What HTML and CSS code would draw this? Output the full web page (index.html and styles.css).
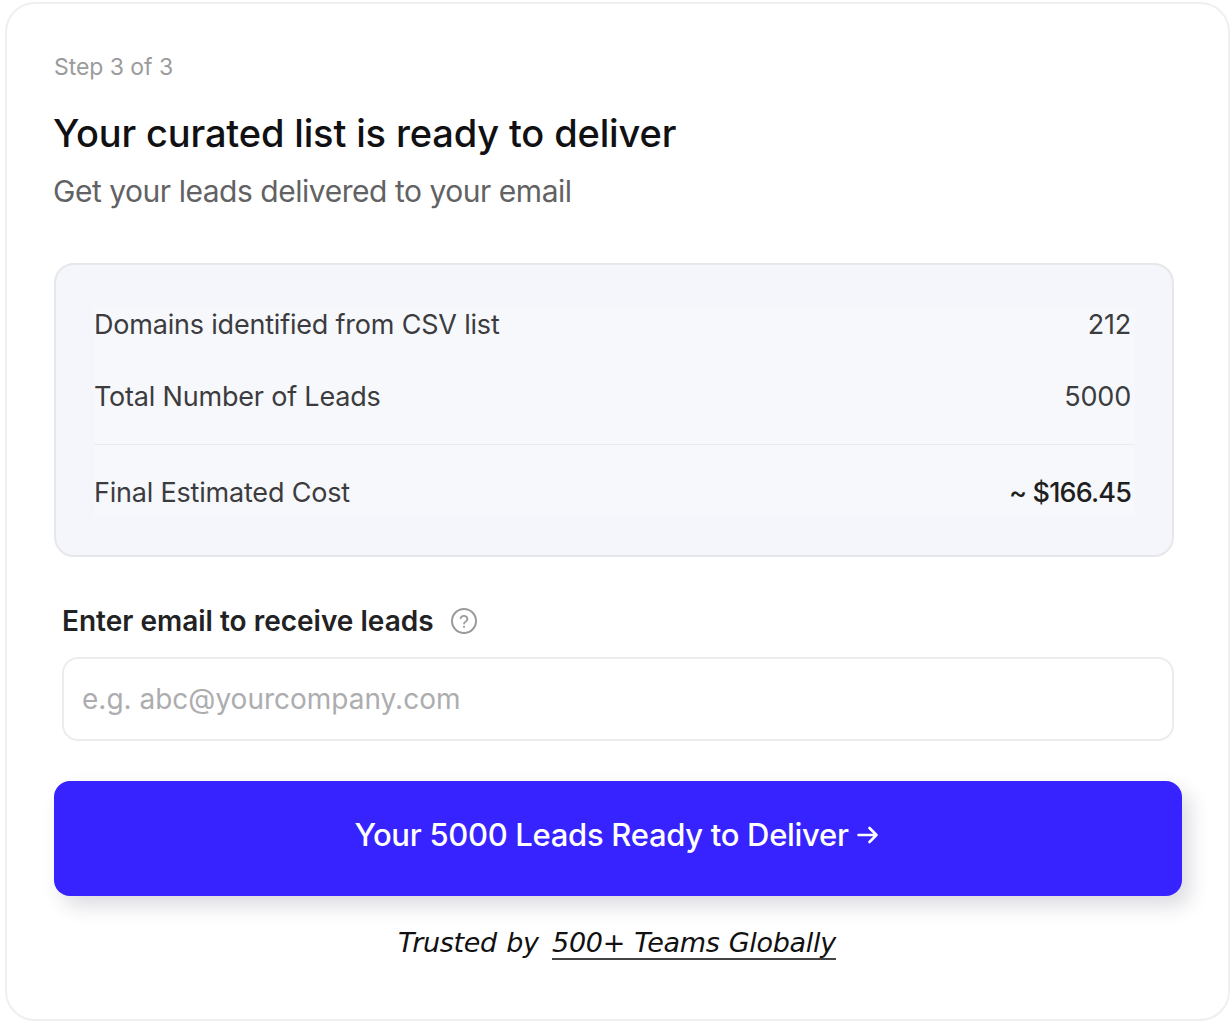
FILE: index.html
```html
<!DOCTYPE html>
<html lang="en">
<head>
<meta charset="utf-8">
<title>Deliver leads</title>
<link rel="stylesheet" href="styles.css">
</head>
<body>
<main class="card">
  <p class="step">Step 3 of 3</p>
  <h1 class="title">Your curated list is ready to deliver</h1>
  <p class="subtitle">Get your leads delivered to your email</p>
  <section class="summary">
    <div class="summary-inner">
      <div class="row row-first"><span>Domains identified from CSV list</span><span>212</span></div>
      <div class="row row-second"><span>Total Number of Leads</span><span>5000</span></div>
      <div class="row row-total"><span>Final Estimated Cost</span><span class="cost">~ $166.45</span></div>
    </div>
  </section>
  <section class="field">
    <div class="label-row">
      <label class="label" for="email">Enter email to receive leads</label>
      <svg class="help" width="28" height="28" viewBox="0 0 28 28" fill="none" aria-hidden="true">
        <circle cx="14" cy="14" r="12" stroke="#9a9a9a" stroke-width="2"/>
        <path d="M10.6 11.2a3.5 3.5 0 0 1 6.800 1c0 2.200-3.300 2.600-3.300 4.400" stroke="#9a9a9a" stroke-width="1.800" stroke-linecap="round"/>
        <circle cx="14" cy="19.8" r="1.1" fill="#9a9a9a"/>
      </svg>
    </div>
    <input class="input" id="email" type="email" placeholder="e.g. abc@yourcompany.com">
  </section>
  <button class="cta" type="button">Your 5000 Leads Ready to Deliver
    <svg class="arrow" width="22" height="20" viewBox="0 0 22 20" fill="none" aria-hidden="true">
      <path d="M1.500 10h18M12.500 3 19.500 10l-7 7" stroke="#fff" stroke-width="2.600" stroke-linecap="round" stroke-linejoin="round"/>
    </svg>
  </button>
  <p class="trust">Trusted by <span class="trust-link">500+ Teams Globally</span></p>
</main>
</body>
</html>
```
FILE: styles.css
```css
* { box-sizing: border-box; }
html, body { margin: 0; background: #fff; }
body { padding: 2px 2px 3px 5px; height: 1024px; overflow: hidden; font-family: Inter, "Liberation Sans", sans-serif; }
.card {
  height: 1019px;
  padding: 48px 46px 0 47px;
  background: #fff;
  border: 2px solid #efeff0;
  border-radius: 30px;
}
.step { margin: 0; font-size: 23px; line-height: 30px; letter-spacing: -0.05px; color: #9b9b9d; }
.title {
  margin: 26px 0 0 -1px;
  font-family: Inter, "Liberation Sans", sans-serif;
  font-size: 38px;
  line-height: 50px;
  font-weight: 500;
  letter-spacing: -0.15px;
  color: #111113;
}
.subtitle { margin: 13px 0 0 -1px; font-size: 30px; line-height: 40px; letter-spacing: -0.47px; color: #626264; }
.summary {
  width: 1120px;
  height: 294px;
  margin-top: 52px;
  padding: 42px 37px 0 38px;
  background: #f5f6fb;
  border: 2px solid #e6e7ea;
  border-radius: 20px;
}
.summary-inner { background: #f7f8fc; height: 209px; }
.row { display: flex; justify-content: space-between; padding-right: 4px; font-size: 27px; line-height: 36px; letter-spacing: -0.2px; color: #3c3c3f; }
.row-second { margin-top: 36px; padding-bottom: 29px; border-bottom: 1px solid #ebebef; }
.row-total { margin-top: 30px; }
.cost { color: #1f1f22; font-weight: 500; letter-spacing: -0.85px; }
.field { margin: 44px 0 0 8px; width: 1112px; }
.label-row { display: flex; align-items: center; gap: 16px; height: 40px; }
.label { font-size: 28px; line-height: 36px; font-weight: 600; color: #222224; }
.help { flex: none; }
.input {
  display: block;
  width: 100%;
  height: 84px;
  margin-top: 16px;
  padding: 0 18px;
  font-family: Inter, "Liberation Sans", sans-serif;
  font-size: 28px;
  background: #fff;
  border: 2px solid #ececee;
  border-radius: 16px;
  outline: none;
}
.input::placeholder { color: #adadb0; opacity: 1; }
.cta {
  display: flex;
  align-items: center;
  justify-content: center;
  gap: 8px;
  width: 1128px;
  height: 115px;
  margin-top: 40px;
  padding: 0 3px 8px 0;
  font-family: Inter, "Liberation Sans", sans-serif;
  font-size: 31px;
  font-weight: 500;
  letter-spacing: -0.3px;
  color: #fff;
  background: #3723ff;
  border: 0;
  border-radius: 16px;
  box-shadow: 8px 10px 20px rgba(40, 40, 70, 0.16);
}
.arrow { flex: none; }
.trust { margin: 28px 0 0; width: 1126px; text-align: center; font-family: "DejaVu Sans", sans-serif; font-style: italic; font-size: 27px; line-height: 38px; letter-spacing: -0.3px; word-spacing: 1px; color: #111; }
.trust-link { margin-left: 4px; border-bottom: 2px solid #444; }
```
